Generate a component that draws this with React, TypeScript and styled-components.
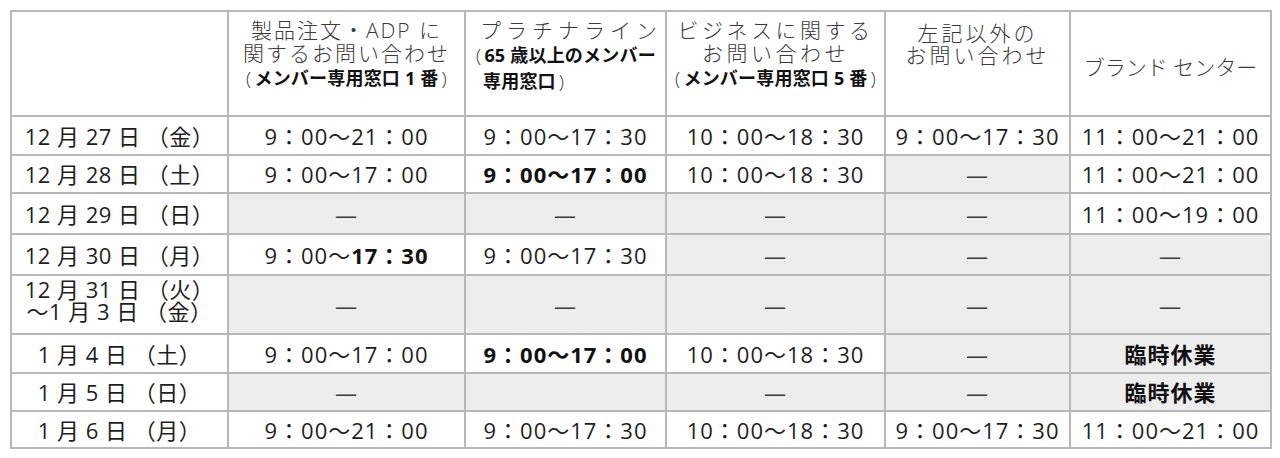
import React from 'react';
import styled, {createGlobalStyle} from 'styled-components';

const GlobalStyle = createGlobalStyle`
  html, body {
    margin: 0;
    padding: 0;
    background: #ffffff;
  }
  body {
    font-family: 'Open Sans', 'Noto Sans CJK JP', sans-serif;
    color: #1e1e1e;
  }
`;

const StPage = styled.div`
  padding: 10px 0 0 10px;
`;

const StTable = styled.table`
  border-collapse: collapse;
  table-layout: fixed;
  width: 1262px;
  border: 2px solid #b3b3b3;
`;

const StCol = styled.col<{$w: number}>`
  width: ${({$w}) => $w}px;
`;

const StRow = styled.tr<{$h: number}>`
  height: ${({$h}) => $h}px;
`;

const StHead = styled.th<{$align?: 'left' | 'center'; $top?: number; $middle?: boolean; $ls?: number}>`
  border: 2px solid #b8b8b8;
  padding: ${({$top}) => $top ?? 7}px 4px 0;
  vertical-align: ${({$middle}) => ($middle ? 'middle' : 'top')};
  text-align: ${({$align}) => $align ?? 'center'};
  font-weight: 400;
  white-space: nowrap;
  overflow: hidden;
  --head-ls: ${({$ls}) => $ls ?? 0}px;
`;

const HeadLine = styled.span<{$indent?: number; $lh?: number}>`
  display: block;
  padding-left: ${({$indent}) => $indent ?? 0}px;
  font-size: 21px;
  line-height: ${({$lh}) => $lh ?? 23}px;
  font-weight: 300;
  color: #3a3a3a;
  letter-spacing: var(--head-ls);
`;

const NoteLine = styled.span<{$indent?: number}>`
  display: block;
  padding-left: ${({$indent}) => $indent ?? 0}px;
  font-size: 18px;
  line-height: 26px;
  font-weight: 700;
  color: #111111;
  letter-spacing: 0.2px;
`;

// 全角カッコ風: 細い括弧に少し余白
const Paren = styled.span`
  font-family: 'Open Sans', sans-serif;
  font-size: 19px;
  font-weight: 300;
  color: #3a3a3a;
  padding: 0 3px;
`;

const StDate = styled.td<{$lift?: number}>`
  border: 2px solid #b8b8b8;
  padding: 0 4px ${({$lift}) => $lift ?? 0}px;
  text-align: center;
  vertical-align: middle;
  font-size: 22px;
  line-height: 22px;
  letter-spacing: 0.5px;
  color: #1e1e1e;
  white-space: nowrap;
`;

const DateLine = styled.span`
  display: block;
`;

const StCell = styled.td<{$shade?: boolean; $bold?: boolean}>`
  border: 2px solid #b8b8b8;
  padding: 0 2px;
  text-align: center;
  vertical-align: middle;
  background: ${({$shade}) => ($shade ? '#ededed' : '#ffffff')};
  font-size: 22px;
  line-height: 24px;
  font-weight: ${({$bold}) => ($bold ? 700 : 400)};
  letter-spacing: 1px;
  color: ${({$shade, $bold}) => ($bold ? '#111111' : $shade ? '#3c3c3c' : '#1e1e1e')};
  white-space: nowrap;

  b {
    font-weight: 700;
    color: #111111;
  }
`;

interface CellData {
  text?: React.ReactNode;
  shade?: boolean;
  bold?: boolean;
}

interface RowData {
  date: React.ReactNode;
  height: number;
  lift?: number;
  cells: CellData[];
}

const DASH = '―';
const off: CellData = {text: DASH, shade: true};

const rows: RowData[] = [
  {
    date: '12 月 27 日 （金）',
    height: 39,
    cells: [{text: '9：00～21：00'}, {text: '9：00～17：30'}, {text: '10：00～18：30'}, {text: '9：00～17：30'}, {text: '11：00～21：00'}],
  },
  {
    date: '12 月 28 日 （土）',
    height: 38,
    cells: [{text: '9：00～17：00'}, {text: '9：00～17：00', bold: true}, {text: '10：00～18：30'}, off, {text: '11：00～21：00'}],
  },
  {
    date: '12 月 29 日 （日）',
    height: 41,
    cells: [off, off, off, off, {text: '11：00～19：00'}],
  },
  {
    date: '12 月 30 日 （月）',
    height: 41,
    cells: [
      {
        text: (
          <>
            9：00～<b>17：30</b>
          </>
        ),
      },
      {text: '9：00～17：30'},
      off,
      off,
      off,
    ],
  },
  {
    date: (
      <>
        <DateLine>12 月 31 日 （火）</DateLine>
        <DateLine>～1 月 3 日 （金）</DateLine>
      </>
    ),
    height: 59,
    lift: 10,
    cells: [off, off, off, off, off],
  },
  {
    date: '1 月 4 日 （土）',
    height: 39,
    cells: [{text: '9：00～17：00'}, {text: '9：00～17：00', bold: true}, {text: '10：00～18：30'}, off, {text: '臨時休業', shade: true, bold: true}],
  },
  {
    date: '1 月 5 日 （日）',
    height: 38,
    cells: [off, {shade: true}, off, off, {text: '臨時休業', shade: true, bold: true}],
  },
  {
    date: '1 月 6 日 （月）',
    height: 37,
    cells: [{text: '9：00～21：00'}, {text: '9：00～17：30'}, {text: '10：00～18：30'}, {text: '9：00～17：30'}, {text: '11：00～21：00'}],
  },
];

const colWidths = [217, 237, 201, 219, 185, 201];

const App = () => {
  return (
    <>
      <GlobalStyle />
      <StPage>
        <StTable>
          <colgroup>
            {colWidths.map((w, i) => (
              <StCol key={i} $w={w} />
            ))}
          </colgroup>
          <thead>
            <StRow $h={105}>
              <StHead />
              <StHead $ls={2}>
                <HeadLine>製品注文・ADP に</HeadLine>
                <HeadLine>関するお問い合わせ</HeadLine>
                <NoteLine>
                  <Paren>(</Paren>メンバー専用窓口 1 番<Paren>)</Paren>
                </NoteLine>
              </StHead>
              <StHead $align="left" $ls={5}>
                <HeadLine $indent={10}>プラチナライン</HeadLine>
                <NoteLine $indent={3}>
                  <Paren>(</Paren>65 歳以上のメンバー
                </NoteLine>
                <NoteLine $indent={13}>
                  専用窓口<Paren>)</Paren>
                </NoteLine>
              </StHead>
              <StHead $ls={3.5}>
                <HeadLine>ビジネスに関する</HeadLine>
                <HeadLine>お問い合わせ</HeadLine>
                <NoteLine>
                  <Paren>(</Paren>メンバー専用窓口 5 番<Paren>)</Paren>
                </NoteLine>
              </StHead>
              <StHead $top={10} $ls={3}>
                <HeadLine $lh={22}>左記以外の</HeadLine>
                <HeadLine $lh={22}>お問い合わせ</HeadLine>
              </StHead>
              <StHead $middle>
                <HeadLine>ブランド センター</HeadLine>
              </StHead>
            </StRow>
          </thead>
          <tbody>
            {rows.map((row, i) => (
              <StRow key={i} $h={row.height}>
                <StDate $lift={row.lift}>{row.date}</StDate>
                {row.cells.map((cell, j) => (
                  <StCell key={j} $shade={cell.shade} $bold={cell.bold}>
                    {cell.text}
                  </StCell>
                ))}
              </StRow>
            ))}
          </tbody>
        </StTable>
      </StPage>
    </>
  );
};

export default App;
